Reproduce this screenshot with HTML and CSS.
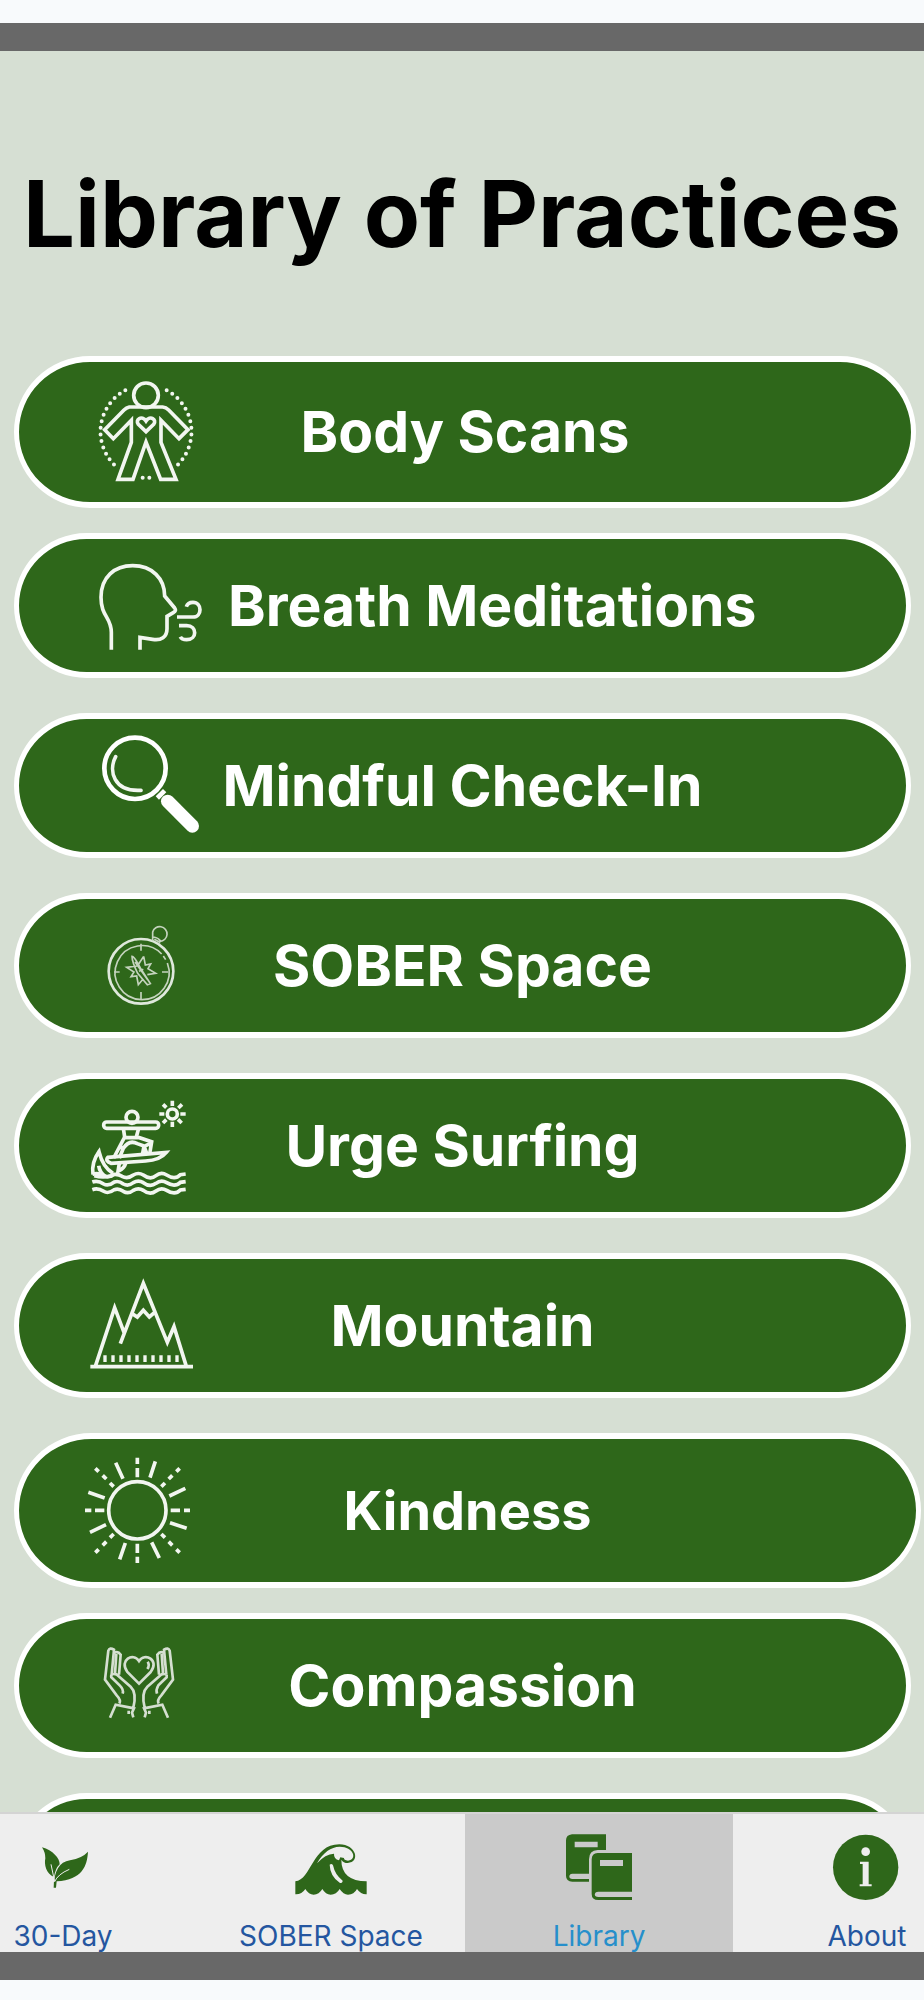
FILE: index.html
```html
<!DOCTYPE html>
<html lang="en">

<head>
    <meta charset="UTF-8">
    <meta name="viewport" content="width=device-width, initial-scale=1.0">
    <title>Library of Practices</title>
    <link rel="stylesheet" href="styles.css">
</head>

<body>

    <div class="screen">
        <main class="library">
            <h1>Library of Practices</h1>

            <div class="practice-list">
                <button class="practice practice-wide">
                    <svg class="icon" viewBox="57 48 375 336">
                        <circle cx="258" cy="106" r="37" />
                        <path d="M258 141H208Q199 143 192 150L134 209L160 236L214 181V247L174 358H219L258 246L302 358H348L303 247V181L357 236L384 209L326 150Q318 142 308 141Z" />
                        <path d="M258 215L235 193C224 178 246 165 258 183C270 165 292 178 281 193Z" />
                        <path class="dots" d="M196 91A140 140 0 0 0 168 319M320 91A140 140 0 0 1 348 319" />
                        <path class="dots" d="M248 353H270" />
                    </svg>
                    <span class="label">Body Scans</span>
                </button>

                <button class="practice">
                    <svg class="icon icon-breath" viewBox="57 30 393 336">
                        <path d="M154 329V277C154 231 123 230 123 172C123 111 164 77 218 77C277 77 314 116 314 168L344 204Q350 212 341 217L321 229V266C321 292 303 302 278 298L240 292V329" />
                        <path d="M351 231H399C427 231 427 187 399 187Q383 187 379 200M357 257H380C412 257 412 299 380 299Q365 299 361 290" />
                    </svg>
                    <span class="label">Breath Meditations</span>
                </button>

                <button class="practice">
                    <svg class="icon" viewBox="57 59 375 336">
                        <circle class="thick" cx="225" cy="174" r="92" />
                        <path class="round" d="M167 139C145 181 160 245 243 240" />
                        <path class="thick" d="M292 263L314 241" />
                        <path class="handle" d="M323 273L397 347" />
                    </svg>
                    <span class="label">Mindful Check-In</span>
                </button>

                <button class="practice">
                    <svg class="icon icon-thin" viewBox="57 25 375 336">
                        <circle class="rim" cx="243" cy="209" r="97" />
                        <path d="M322 184A81 81 0 1 1 305 157M310 163L317 174" />
                        <path d="M243 126V147M243 271V292M162 211H179M306 211H324" />
                        <path d="M278 117V91A22 22 0 1 1 300 119M277 106Q291 106 300 116L298 126M283 113L298 121" />
                        <path d="M216 164C224 164 231 181 241 199L271 246L262 249L233 215Q216 181 216 164ZM251 164L236 187M251 164L256 190L272 187L264 201L287 215L262 219M231 193L200 197L222 211L213 225L230 223L235 249L250 231M225 181L263 234M237 209L250 203" />
                    </svg>
                    <span class="label">SOBER Space</span>
                </button>

                <button class="practice">
                    <svg class="icon" viewBox="57 33 375 336">
                        <circle cx="216" cy="115" r="18" />
                        <rect x="131" y="129" width="165" height="19" rx="9" />
                        <path d="M190 148L194 174L161 237M236 148L229 174M188 176H238L275 188L269 225M178 237L190 208Q208 181 232 194L252 201L247 228M188 201L176 208M253 202L271 193M254 207L262 228" />
                        <path d="M144 235L319 220C307 235 286 244 257 246L153 253Q134 246 144 235Z" />
                        <path d="M99 286C94 255 105 235 117 218C123 243 137 270 159 283M116 260Q119 281 137 293M103 290Q129 298 156 290M178 253L174 277Q192 269 197 253" />
                        <circle cx="337" cy="105" r="15" />
                        <path d="M337 65V81M337 128V144M298 105H313M361 105H377M309 76L319 86M354 121L365 132M309 132L319 122M355 87L366 76" />
                        <path d="M97 286Q114 280 130 290Q145 297 163 286Q176 285 186 292Q203 301 220 288Q235 279 250 288Q271 304 288 290Q303 278 320 288Q345 304 361 287L377 285" />
                        <path d="M97 309Q114 303 131 315Q145 323 163 309Q176 304 190 315Q205 323 220 311Q235 302 250 311Q270 326 288 313Q303 301 320 311Q345 326 361 310L377 308" />
                        <path d="M97 332Q114 326 131 337Q145 346 163 332Q176 327 190 337Q205 346 220 334Q235 325 250 334Q270 350 288 336Q303 324 320 334Q345 350 361 333L377 331" />
                    </svg>
                    <span class="label">Urge Surfing</span>
                </button>

                <button class="practice">
                    <svg class="icon" viewBox="57 33 375 336">
                        <path d="M91 323H399M106 322L164 146L192 220M181 254L250 73L322 250L342 203L379 322" />
                        <path d="M217 164L232 174L250 154L268 174L284 160" />
                        <path class="trees" d="M130 299H360" />
                    </svg>
                    <span class="label">Mountain</span>
                </button>

                <button class="practice practice-widest">
                    <svg class="icon" viewBox="57 48 375 336">
                        <circle cx="232" cy="214" r="86" />
                        <path class="ray" d="M232 56V75M232 87V115M232 314V342M232 353V372M75 214H94M105 214H133M332 214H360M372 214H390" />
                        <path class="ray" d="M167 71L189 119M286 67L270 116M85 160L134 177M328 171L376 148M330 251L380 268M90 280L138 257M196 312L179 361M275 310L298 357" />
                        <path class="ray" d="M106 88L116 98M128 109L139 120M150 132L161 143M359 88L349 98M337 109L326 120M315 132L304 143M106 341L116 331M128 319L139 308M150 296L161 285M359 341L349 331M337 319L326 308M315 296L304 285" />
                    </svg>
                    <span class="label">Kindness</span>
                </button>

                <button class="practice">
                    <svg class="icon icon-soft" viewBox="57 32 375 336">
                        <path d="M237 193L202 158C176 122 220 98 237 125C254 98 300 122 272 158ZM263 127Q270 138 262 149" />
                        <path d="M150 295L167 256L222 267L216 280L220 294M178 253Q184 242 170 228L135 181L145 94Q149 83 162 91L155 166M162 101Q174 94 182 106L177 166M169 104L165 163M188 223Q192 211 179 198L154 174Q151 161 169 165L212 202Q231 220 220 265M206 274V284" />
                        <path d="M324 295L307 256L252 267L258 280L254 294M296 253Q290 242 304 228L339 181L329 94Q325 83 312 91L319 166M312 101Q300 94 292 106L297 166M305 104L309 163M291 223Q287 211 295 198L320 174Q323 161 305 165L262 202Q243 220 254 265M268 274V284" />
                    </svg>
                    <span class="label">Compassion</span>
                </button>

                <button class="practice" aria-label="More practices"></button>
            </div>
        </main>

        <nav class="tab-bar">
            <a class="tab" href="#">
                <svg class="tab-icon" viewBox="84 150 210 222">
                    <path d="M126 202C158 211 180 235 179 253Q166 265 162 291C138 282 132 253 136 235Q136 217 126 202Z" />
                    <path d="M264 215C261 258 248 298 170 304L168 323H161Q162 248 210 241Q247 234 264 215Z" />
                    <path class="vein" d="M153 253L164 305Q173 283 208 268" />
                </svg>
                <span>30-Day</span>
            </a>
            <a class="tab" href="#">
                <svg class="tab-icon" viewBox="888 150 210 222">
                    <path d="M886 304C934 301 936 193 1018 193C1069 193 1082 247 1043 249Q1030 249 1024 239Q1024 303 1100 304V343Q1083 344 1071 327Q1062 344 1044 344Q1030 344 1019 327Q1009 344 992 344Q977 344 967 327Q957 344 941 344Q926 344 916 327Q905 344 886 343Z" />
                    <path class="cut" d="M951 250C969 217 993 201 1019 200C1061 200 1073 238 1044 242Q1031 241 1032 234L1021 232L1017 241Q1001 237 1002 221Q976 222 951 250Z" />
                    <path class="cut" d="M989 254Q995 249 999 256Q1005 285 1028 302Q1028 309 1020 309Q990 289 989 254Z" />
                </svg>
                <span>SOBER Space</span>
            </a>
            <a class="tab tab-active" href="#">
                <svg class="tab-icon" viewBox="306 150 210 222">
                    <path fill-rule="evenodd" d="M330 163H432V210H407Q381 211 381 238V281H331C319 281 319 297 331 297H381V305H331Q312 304 312 287V181Q312 165 330 163ZM338 185V202H407V185Z" />
                    <path fill-rule="evenodd" d="M407 219H510V335H409C395 335 395 351 409 351H510V360H409Q389 360 389 342V238Q389 220 407 219ZM414 240V258H483V240Z" />
                </svg>
                <span>Library</span>
            </a>
            <a class="tab" href="#">
                <svg class="tab-icon" viewBox="1108 150 210 222">
                    <circle cx="1209" cy="262" r="98" />
                    <circle class="cut" cx="1209" cy="215" r="13" />
                    <path class="cut" d="M1192 245H1218V313H1227V319H1191V313H1200V252H1192Z" />
                </svg>
                <span>About</span>
            </a>
        </nav>
    </div>

</body>

</html>
```
FILE: styles.css
```css
/* Global Styling */
* {
    box-sizing: border-box;
}

body {
    margin: 0;
    padding: 23px 0 20px;
    height: 100vh;
    background-color: #f8fafc;
    font-family: 'Inter', 'Liberation Sans', sans-serif;
}

.screen {
    display: flex;
    flex-direction: column;
    height: 100%;
    overflow: hidden;
    border-top: 28px solid #686868;
    border-bottom: 28px solid #686868;
    background-color: #d6dfd3;
}

/* Library */
.library {
    flex: 1;
    min-height: 0;
    overflow: hidden;
}

h1 {
    margin: 0;
    padding: 103px 0 82px;
    font-size: 92px;
    font-weight: 700;
    line-height: 120px;
    text-align: center;
    white-space: nowrap;
    color: #000;
}

.practice-list {
    display: flex;
    flex-direction: column;
    gap: 35px;
    padding: 0 13px 0 14px;
}

.practice {
    display: grid;
    grid-template-columns: 1fr auto 1fr;
    align-items: center;
    flex-shrink: 0;
    height: 145px;
    padding: 0;
    border: 6px solid #fff;
    border-width: 6px 5px;
    border-radius: 80px;
    background-color: #2e671a;
    color: #fff;
    font-family: inherit;
    cursor: pointer;
}

.practice-wide {
    height: 152px;
    margin-right: -5px;
    margin-bottom: -10px;
}

.practice-widest {
    height: 155px;
    margin-right: -10px;
    margin-bottom: -10px;
}

.label {
    font-size: 57px;
    font-weight: 700;
    line-height: 72px;
    white-space: nowrap;
}

.practice-widest .label {
    font-size: 54px;
}

/* Practice icons */
.icon {
    width: 125px;
    height: 112px;
    margin: 0 18px 0 60px;
    fill: none;
    stroke: #f2f6f0;
    stroke-width: 11;
}

.icon-breath {
    width: 131px;
}

.icon-thin {
    stroke: #c4d3bd;
    stroke-width: 5;
}

.icon-soft {
    stroke: #d5dfd1;
    stroke-width: 8;
}

.dots {
    stroke-width: 12;
    stroke-linecap: round;
    stroke-dasharray: 0 20;
}

.thick {
    stroke: #fff;
    stroke-width: 14;
}

.round {
    stroke-linecap: round;
}

.handle {
    stroke: #fff;
    stroke-width: 40;
    stroke-linecap: round;
}

.rim {
    stroke: #dfe8dc;
    stroke-width: 8;
}

.trees {
    stroke-width: 20;
    stroke-dasharray: 10 14;
}

.ray {
    stroke-width: 11;
}

/* Tab bar */
.tab-bar {
    display: flex;
    justify-content: center;
    flex-shrink: 0;
    height: 140px;
    padding-left: 6px;
    border-top: 2px solid #d4d4d4;
    background-color: #eee;
    overflow: hidden;
}

.tab {
    display: flex;
    flex-direction: column;
    align-items: center;
    flex: 0 0 268px;
    padding-top: 16px;
    color: #2456a0;
    font-size: 28px;
    line-height: 32px;
    text-decoration: none;
    white-space: nowrap;
}

.tab-active {
    background-color: #cacaca;
    color: #268fcb;
}

.tab-icon {
    flex-shrink: 0;
    width: 70px;
    height: 74px;
    margin-bottom: 16px;
    fill: #2e671a;
    overflow: visible;
}

.cut {
    fill: #eee;
}

.vein {
    fill: none;
    stroke: #eee;
    stroke-width: 3;
}
```
